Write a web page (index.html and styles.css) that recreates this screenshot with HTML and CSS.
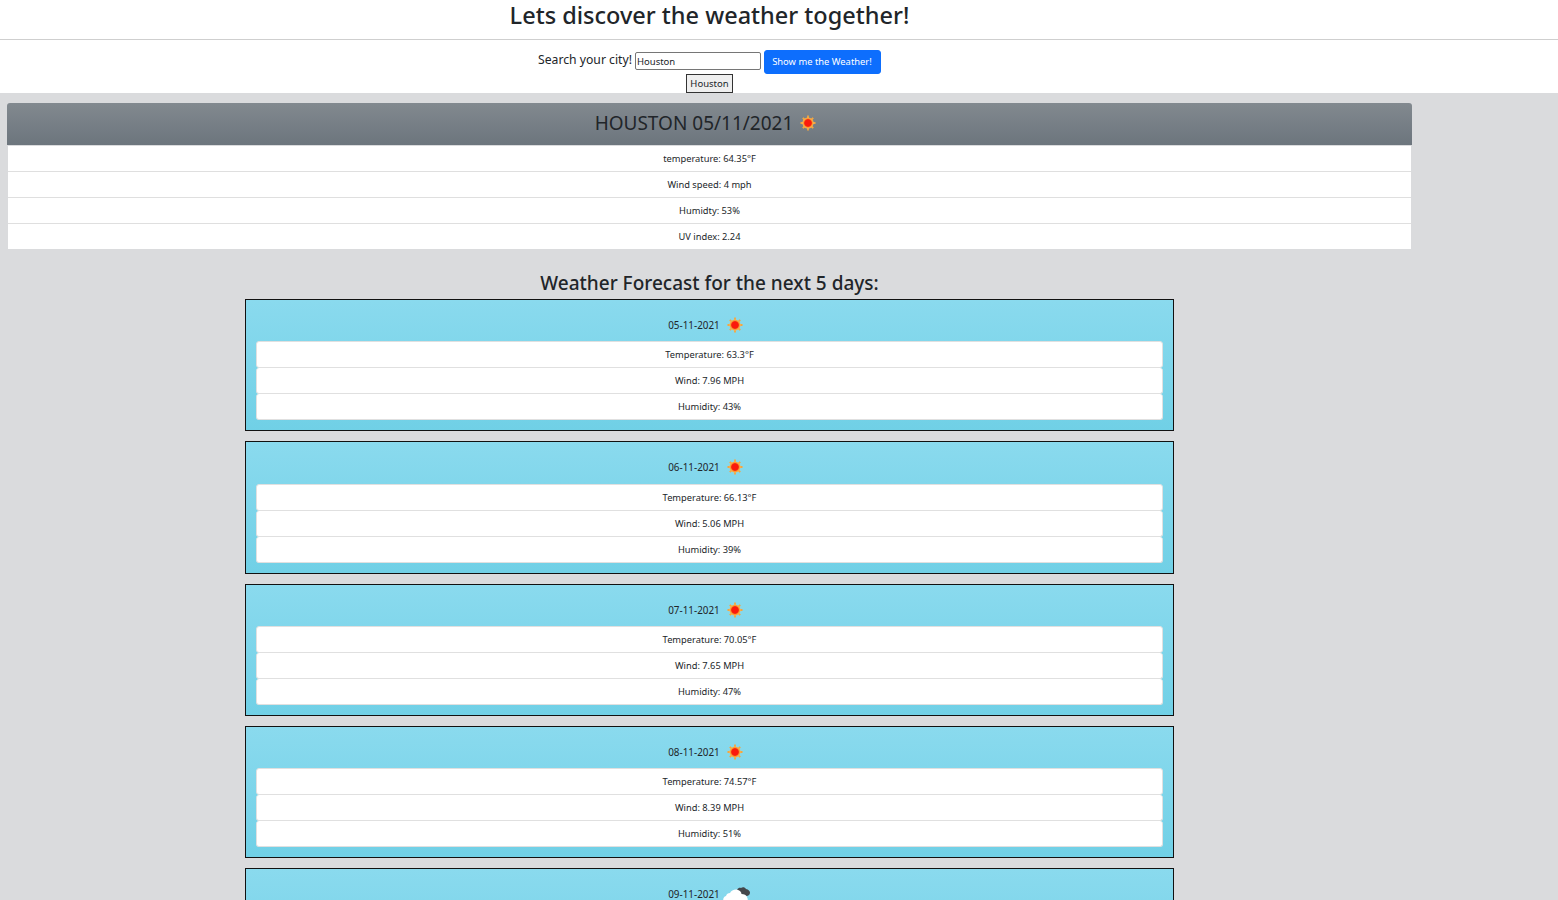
FILE: index.html
```html
<!DOCTYPE html>
<html lang="en">
<head>
    <meta charset="UTF-8">
    <title>Weather</title>
    <link rel="stylesheet" href="styles.css">
</head>
<body>
    <svg class="defs" width="0" height="0">
        <defs>
            <radialGradient id="glow">
                <stop offset="0.6" stop-color="#fb1a0c"/>
                <stop offset="0.75" stop-color="#f8922a"/>
                <stop offset="1" stop-color="#f9b85c"/>
            </radialGradient>
        </defs>
        <symbol id="sun" viewBox="0 0 28 26">
            <path d="M12 5.500v15M4.500 13h15M6.800 7.800l10.400 10.400M6.800 18.200l10.400-10.400" stroke="#f5a63e" stroke-width="1.800"/>
            <circle cx="12" cy="13" r="5.600" fill="url(#glow)"/>
        </symbol>
        <symbol id="clouds" viewBox="0 0 28 26">
            <path d="M13 12c0-3 2.500-6 5-5 1.500-1.500 4-1 5 1 2.500.5 4 2 4 3.500 0 2-1 3-3 3.500H15z" fill="#44474b"/>
            <path d="M2 22c-2.500-1.500-2.500-6 1-7 .5-2 2-3 4-3 1.500-3.500 7-5 10-2 1 1 1.500 2 1.500 3 2.500 0 5 1 5.500 3 1 2 1 4 0 6z" fill="#fff"/>
        </symbol>
    </svg>

    <header class="top">
        <h1 class="title">Lets discover the weather together!</h1>
        <hr class="rule">
        <form class="search">
            <div class="search-row">
                <label class="search-label" for="city">Search your city!</label>
                <input class="search-input" id="city" type="text" value="Houston">
                <button class="search-btn" type="button">Show me the Weather!</button>
            </div>
            <button class="history-btn" type="button">Houston</button>
        </form>
    </header>

    <main class="page">
        <section class="today">
            <h2 class="today-head">HOUSTON 05/11/2021 <svg class="icon"><use href="#sun"/></svg></h2>
            <ul class="today-list">
                <li>temperature: 64.35°F</li>
                <li>Wind speed: 4 mph</li>
                <li>Humidty: 53%</li>
                <li>UV index: 2.24</li>
            </ul>
        </section>

        <h3 class="forecast-title">Weather Forecast for the next 5 days:</h3>

        <section class="forecast">
            <article class="day">
                <div class="day-head">05-11-2021 <svg class="icon"><use href="#sun"/></svg></div>
                <ul class="day-list">
                    <li>Temperature: 63.3°F</li>
                    <li>Wind: 7.96 MPH</li>
                    <li>Humidity: 43%</li>
                </ul>
            </article>
            <article class="day">
                <div class="day-head">06-11-2021 <svg class="icon"><use href="#sun"/></svg></div>
                <ul class="day-list">
                    <li>Temperature: 66.13°F</li>
                    <li>Wind: 5.06 MPH</li>
                    <li>Humidity: 39%</li>
                </ul>
            </article>
            <article class="day">
                <div class="day-head">07-11-2021 <svg class="icon"><use href="#sun"/></svg></div>
                <ul class="day-list">
                    <li>Temperature: 70.05°F</li>
                    <li>Wind: 7.65 MPH</li>
                    <li>Humidity: 47%</li>
                </ul>
            </article>
            <article class="day">
                <div class="day-head">08-11-2021 <svg class="icon"><use href="#sun"/></svg></div>
                <ul class="day-list">
                    <li>Temperature: 74.57°F</li>
                    <li>Wind: 8.39 MPH</li>
                    <li>Humidity: 51%</li>
                </ul>
            </article>
            <article class="day">
                <div class="day-head">09-11-2021 <svg class="icon"><use href="#clouds"/></svg></div>
            </article>
        </section>
    </main>
</body>
</html>
```

FILE: styles.css
```css
* {
    box-sizing: border-box;
}
html, body {
    height: 100vh;
    overflow: hidden;
}
body {
    margin: 0;
    font-family: "Noto Sans", "Open Sans", sans-serif;
    color: #212529;
    background-color: #dadbdd;
}
.defs {
    display: block;
    height: 0;
}
.icon {
    flex: none;
    width: 28px;
    height: 26px;
}
.top {
    background-color: #fff;
    height: 93px;
    width: 100%;
}
.title {
    width: 1419px;
    height: 39px;
    margin: 0;
    font-size: 23.5px;
    font-weight: 500;
    line-height: 31px;
    text-align: center;
}
.rule {
    margin: 0;
    border: 0;
    border-top: 1px solid #cfcfcf;
}
.search {
    width: 1419px;
    padding-top: 10px;
    text-align: center;
}
.search-row {
    display: flex;
    justify-content: center;
    height: 24px;
}
.search-label {
    font-size: 12.2px;
    line-height: 20px;
    margin-right: 3px;
}
.search-input {
    width: 126px;
    height: 18px;
    margin-top: 2px;
    padding: 0 1px;
    font: 9.5px "Noto Sans", sans-serif;
    color: #212529;
    border: 1px solid #767676;
    border-radius: 2px;
}
.search-btn {
    width: 117px;
    height: 24px;
    margin-left: 3px;
    padding: 0 1px 2px 0;
    font: 9.4px "Noto Sans", sans-serif;
    color: #fff;
    background-color: #0d6efd;
    border: 1px solid #0d6efd;
    border-radius: 3px;
}
.history-btn {
    display: block;
    width: 47px;
    height: 19px;
    margin: 0 auto;
    padding: 0;
    font: 9.5px "Noto Sans", sans-serif;
    color: #212529;
    background-color: #efefef;
    border: 1px solid #333;
}
.page {
    width: 1419px;
    padding: 10px 7px 0;
}
.today-head {
    display: flex;
    align-items: center;
    justify-content: center;
    gap: 3px;
    height: 42px;
    margin: 0;
    padding-bottom: 3px;
    font-size: 19px;
    font-weight: 400;
    color: #212529;
    background: linear-gradient(180deg, #82898f, #6c757d);
    border-radius: 3px 3px 0 0;
}
.today-list,
.day-list {
    margin: 0;
    padding: 0;
    list-style: none;
    font-size: 9.3px;
    text-align: center;
}
.today-list {
    margin: 1px 1px 0;
}
.today-list li {
    height: 26px;
    line-height: 25px;
    background-color: #fff;
    border-bottom: 1px solid #dfdfdf;
}
.today-list li:last-child {
    height: 25px;
    border-bottom: 0;
}
.forecast-title {
    height: 50px;
    margin: 0;
    padding-top: 22px;
    font-size: 19px;
    font-weight: 500;
    line-height: 25px;
    text-align: center;
}
.forecast {
    width: 929px;
    margin: 0 auto;
}
.day {
    height: 132.3px;
    margin-bottom: 10px;
    padding: 10px;
    border: 1px solid #111;
    background: linear-gradient(180deg, #8adaee, #70d0e6);
}
.day-head {
    display: flex;
    align-items: center;
    justify-content: center;
    gap: 3px;
    height: 31.3px;
    padding-bottom: 1.3px;
    font-size: 9.9px;
}
.day-list li {
    height: 26px;
    line-height: 25px;
    background-color: #fff;
    border: 1px solid #e0e0e0;
    border-top: 0;
    border-radius: 3px;
}
.day-list li:first-child {
    height: 27px;
    border-top: 1px solid #e0e0e0;
}
```
